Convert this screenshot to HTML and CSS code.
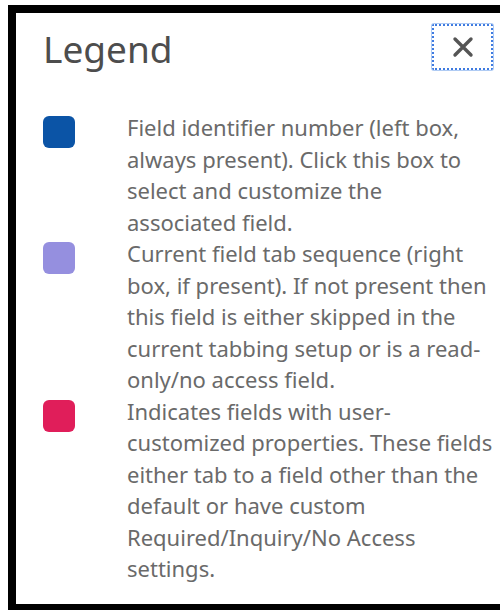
FILE: index.html
```html
<!DOCTYPE html>
<html lang="en">
<head>
<meta charset="utf-8">
<title>Legend</title>
<link rel="stylesheet" href="styles.css">
</head>
<body>
<div class="panel">
  <div class="header">
    <h1 class="title">Legend</h1>
    <button class="close" type="button" aria-label="Close">
      <svg width="22" height="22" viewBox="0 0 22 22" aria-hidden="true">
        <path d="M3 3 L19 19 M19 3 L3 19" stroke="#555" stroke-width="3.4" stroke-linecap="round" fill="none"/>
      </svg>
    </button>
  </div>
  <div class="legend">
    <span class="swatch swatch-id"></span>
    <p class="desc">Field identifier number (left box, always present). Click this box to select and customize the associated field.</p>
    <span class="swatch swatch-tab"></span>
    <p class="desc">Current field tab sequence (right box, if present). If not present then this field is either skipped in the current tabbing setup or is a read-only/no access field.</p>
    <span class="swatch swatch-custom"></span>
    <p class="desc">Indicates fields with user-customized properties. These fields either tab to a field other than the default or have custom Required/Inquiry/No Access settings.</p>
  </div>
</div>
</body>
</html>
```

FILE: styles.css
```css
html, body {
  margin: 0;
  padding: 0;
  background: #fff;
  overflow: hidden;
}

body {
  padding: 5px 0 0 8px;
  font-family: "Noto Sans", "Open Sans", sans-serif;
}

.panel {
  width: 492px;
  height: 607px;
  border: 8px solid #000;
  border-right: none;
  background: #fff;
  box-sizing: border-box;
  padding: 0 0 0 27px;
}

.header {
  display: flex;
  justify-content: space-between;
  align-items: flex-start;
  width: 450px;
  height: 99px;
}

.title {
  margin: 13px 0 0;
  font-size: 37px;
  font-weight: 400;
  line-height: 46px;
  color: #4d4d4d;
}

.close {
  margin-top: 11px;
  width: 61px;
  height: 46px;
  padding: 0;
  display: flex;
  align-items: center;
  justify-content: center;
  background: #fff;
  border: 2px dotted #3f7be0;
  border-radius: 2px;
  box-shadow: 0 0 0 1px rgba(110, 160, 235, 0.55);
  cursor: pointer;
}

.legend {
  display: grid;
  grid-template-columns: 84px 367px;
  align-items: start;
}

.swatch {
  display: block;
  width: 32px;
  height: 32px;
  margin-top: 4px;
  border-radius: 6px;
}

.swatch-id { background: #0b54a6; }
.swatch-tab { background: #958fdf; }
.swatch-custom { background: #e01e5a; }

.desc {
  margin: 0;
  font-size: 22px;
  line-height: 31.5px;
  color: #6a6a6a;
}
```
